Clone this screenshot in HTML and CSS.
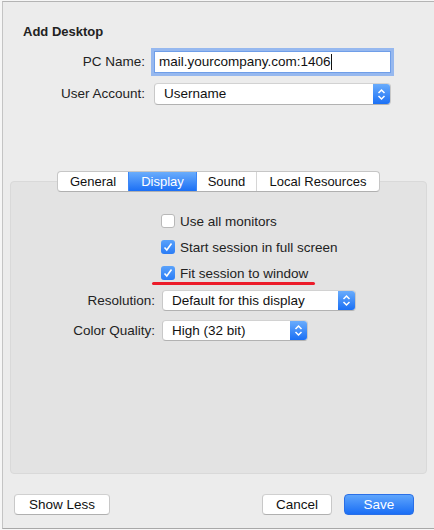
FILE: index.html
```html
<!DOCTYPE html>
<html lang="en">
<head>
    <meta charset="UTF-8">
    <meta name="viewport" content="width=device-width, initial-scale=1.0">
    <title>Add Desktop</title>
    <link rel="stylesheet" href="styles.css">
</head>
<body>
<div class="window">
    <h1 class="title">Add Desktop</h1>

    <div class="form">
        <label class="form-label">PC Name:</label>
        <div class="textfield">mail.yourcompany.com:1406<span class="caret"></span></div>
        <label class="form-label">User Account:</label>
        <div class="popup popup-account">
            <span class="popup-value">Username</span>
            <span class="stepper">
                <svg width="9" height="13" viewBox="0 0 9 13"><path d="M1.5 5 L4.5 2 L7.5 5 M1.5 8 L4.5 11 L7.5 8" fill="none" stroke="#fff" stroke-width="1.5"/></svg>
            </span>
        </div>
    </div>

    <div class="tabs">
        <div class="tab tab-general">General</div>
        <div class="tab tab-display active">Display</div>
        <div class="tab tab-sound">Sound</div>
        <div class="tab tab-local">Local Resources</div>
    </div>

    <div class="panel">
        <div class="checks">
            <div class="check">
                <span class="box"></span>
                <span>Use all monitors</span>
            </div>
            <div class="check">
                <span class="box checked">
                    <svg width="14" height="14" viewBox="0 0 14 14"><path d="M3.5 7.5 L5.8 10 L10.5 3.5" fill="none" stroke="#fff" stroke-width="1.6"/></svg>
                </span>
                <span>Start session in full screen</span>
            </div>
            <div class="check marked">
                <span class="box checked">
                    <svg width="14" height="14" viewBox="0 0 14 14"><path d="M3.5 7.5 L5.8 10 L10.5 3.5" fill="none" stroke="#fff" stroke-width="1.6"/></svg>
                </span>
                <span>Fit session to window</span>
            </div>
        </div>

        <div class="form form-panel">
            <label class="form-label">Resolution:</label>
            <div class="popup popup-resolution">
                <span class="popup-value">Default for this display</span>
                <span class="stepper">
                    <svg width="9" height="13" viewBox="0 0 9 13"><path d="M1.5 5 L4.5 2 L7.5 5 M1.5 8 L4.5 11 L7.5 8" fill="none" stroke="#fff" stroke-width="1.5"/></svg>
                </span>
            </div>
            <label class="form-label">Color Quality:</label>
            <div class="popup popup-color">
                <span class="popup-value">High (32 bit)</span>
                <span class="stepper">
                    <svg width="9" height="13" viewBox="0 0 9 13"><path d="M1.5 5 L4.5 2 L7.5 5 M1.5 8 L4.5 11 L7.5 8" fill="none" stroke="#fff" stroke-width="1.5"/></svg>
                </span>
            </div>
        </div>
    </div>

    <div class="footer">
        <button class="btn btn-less">Show Less</button>
        <div class="footer-right">
            <button class="btn btn-cancel">Cancel</button>
            <button class="btn btn-save">Save</button>
        </div>
    </div>
</div>
</body>
</html>
```

FILE: styles.css
```css
* {
    box-sizing: border-box;
}

body {
    margin: 0;
    background-color: #f6f6f6;
    font-family: 'Liberation Sans', 'Helvetica', 'Arial', sans-serif;
    font-size: 13px;
    color: #222;
    overflow: hidden;
}

.window {
    margin: 1px 0 0 2px;
    height: 528px;
    background-color: #ececec;
    border-top: 1px solid #b4b4b4;
    border-left: 1px solid #c4c4c4;
    border-bottom: 1px solid #a8a8a8;
    display: flex;
    flex-direction: column;
}

.title {
    margin: 22px 0 0 20px;
    font-size: 13px;
    line-height: 16px;
    font-weight: bold;
    color: #222;
}

/* label / control pairs */
.form {
    display: grid;
    grid-template-columns: 142px 237px;
    column-gap: 9px;
    row-gap: 10px;
    align-items: center;
    margin-top: 11px;
}

.form-label {
    text-align: right;
    line-height: 16px;
    font-size: 13.5px;
}

.textfield {
    height: 22px;
    padding: 0 4px;
    line-height: 20px;
    font-size: 13.5px;
    color: #111;
    background-color: white;
    border: 1px solid #6f9ee8;
    box-shadow: 0 0 0 3px rgba(122, 167, 240, 0.75);
    display: flex;
    align-items: center;
}

.caret {
    display: inline-block;
    width: 1px;
    height: 16px;
    background-color: #111;
}

.popup {
    height: 22px;
    display: flex;
    align-items: stretch;
    background-color: white;
    border: 1px solid #c8c8c8;
    border-top-color: #d2d2d2;
    border-bottom-color: #b2b2b2;
    border-radius: 4px;
    overflow: hidden;
}

.popup-value {
    flex: 1;
    padding-left: 9px;
    line-height: 20px;
    font-size: 13.5px;
    color: #111;
}

.stepper {
    width: 17px;
    display: flex;
    align-items: center;
    justify-content: center;
    background: linear-gradient(#69acfc, #1b70f5);
}

/* segmented control sitting on the panel edge */
.tabs {
    position: relative;
    z-index: 1;
    align-self: center;
    display: flex;
    margin-top: 66px;
    height: 21px;
    background-color: white;
    border: 1px solid #c6c6c6;
    border-bottom-color: #b0b0b0;
    border-radius: 4px;
    overflow: hidden;
}

.tab {
    text-align: center;
    line-height: 19px;
    font-size: 13px;
    color: #111;
    border-left: 1px solid #d6d6d6;
}

.tab:first-child {
    border-left: none;
}

.tab-general {
    width: 70px;
}

.tab-display {
    width: 68px;
}

.tab-sound {
    width: 60px;
}

.tab-local {
    width: 123px;
}

.tab.active {
    color: white;
    border-left-color: #3b86f7;
    background: linear-gradient(#6aadfc, #1b6ff5);
}

.tab.active + .tab {
    border-left-color: #3b86f7;
}

.panel {
    margin: -11px 7px 0;
    height: 293px;
    background-color: #e3e3e3;
    border: 1px solid #d9d9d9;
    border-radius: 4px;
    padding-top: 30px;
}

.checks {
    display: flex;
    flex-direction: column;
    gap: 8px;
    margin-left: 150px;
}

.check {
    position: relative;
    display: flex;
    align-items: center;
    gap: 5px;
    height: 18px;
    font-size: 13.5px;
}

.box {
    width: 14px;
    height: 14px;
    background-color: white;
    border: 1px solid #b8b8b8;
    border-radius: 3px;
    display: flex;
}

.box.checked {
    border: none;
    background: linear-gradient(#5aa2fb, #2a7cf6);
}

/* red underline annotation */
.check.marked::after {
    content: '';
    position: absolute;
    left: -9px;
    top: 18px;
    width: 163px;
    height: 3px;
    border-radius: 2px;
    background-color: #ec1c2a;
}

.form-panel {
    grid-template-columns: 144px auto;
    column-gap: 7px;
    row-gap: 9px;
    margin-top: 8px;
    justify-items: start;
}

.form-panel .form-label {
    justify-self: end;
}

.popup-resolution {
    width: 194px;
    height: 21px;
}

.popup-color {
    width: 146px;
    height: 21px;
}

.footer {
    display: flex;
    justify-content: space-between;
    margin-top: 20px;
    padding: 0 20px 0 11px;
}

.footer-right {
    display: flex;
    gap: 12px;
}

.btn {
    height: 21px;
    padding: 0;
    font-family: inherit;
    font-size: 13.5px;
    color: #111;
    background-color: white;
    border: 1px solid #c8c8c8;
    border-top-color: #d0d0d0;
    border-bottom-color: #b0b0b0;
    border-radius: 4px;
}

.btn-less {
    width: 96px;
}

.btn-cancel {
    width: 70px;
}

.btn-save {
    width: 70px;
    color: white;
    border-color: #2a6fe6;
    background: linear-gradient(#5ea5fc, #1a6ef5);
}
```
